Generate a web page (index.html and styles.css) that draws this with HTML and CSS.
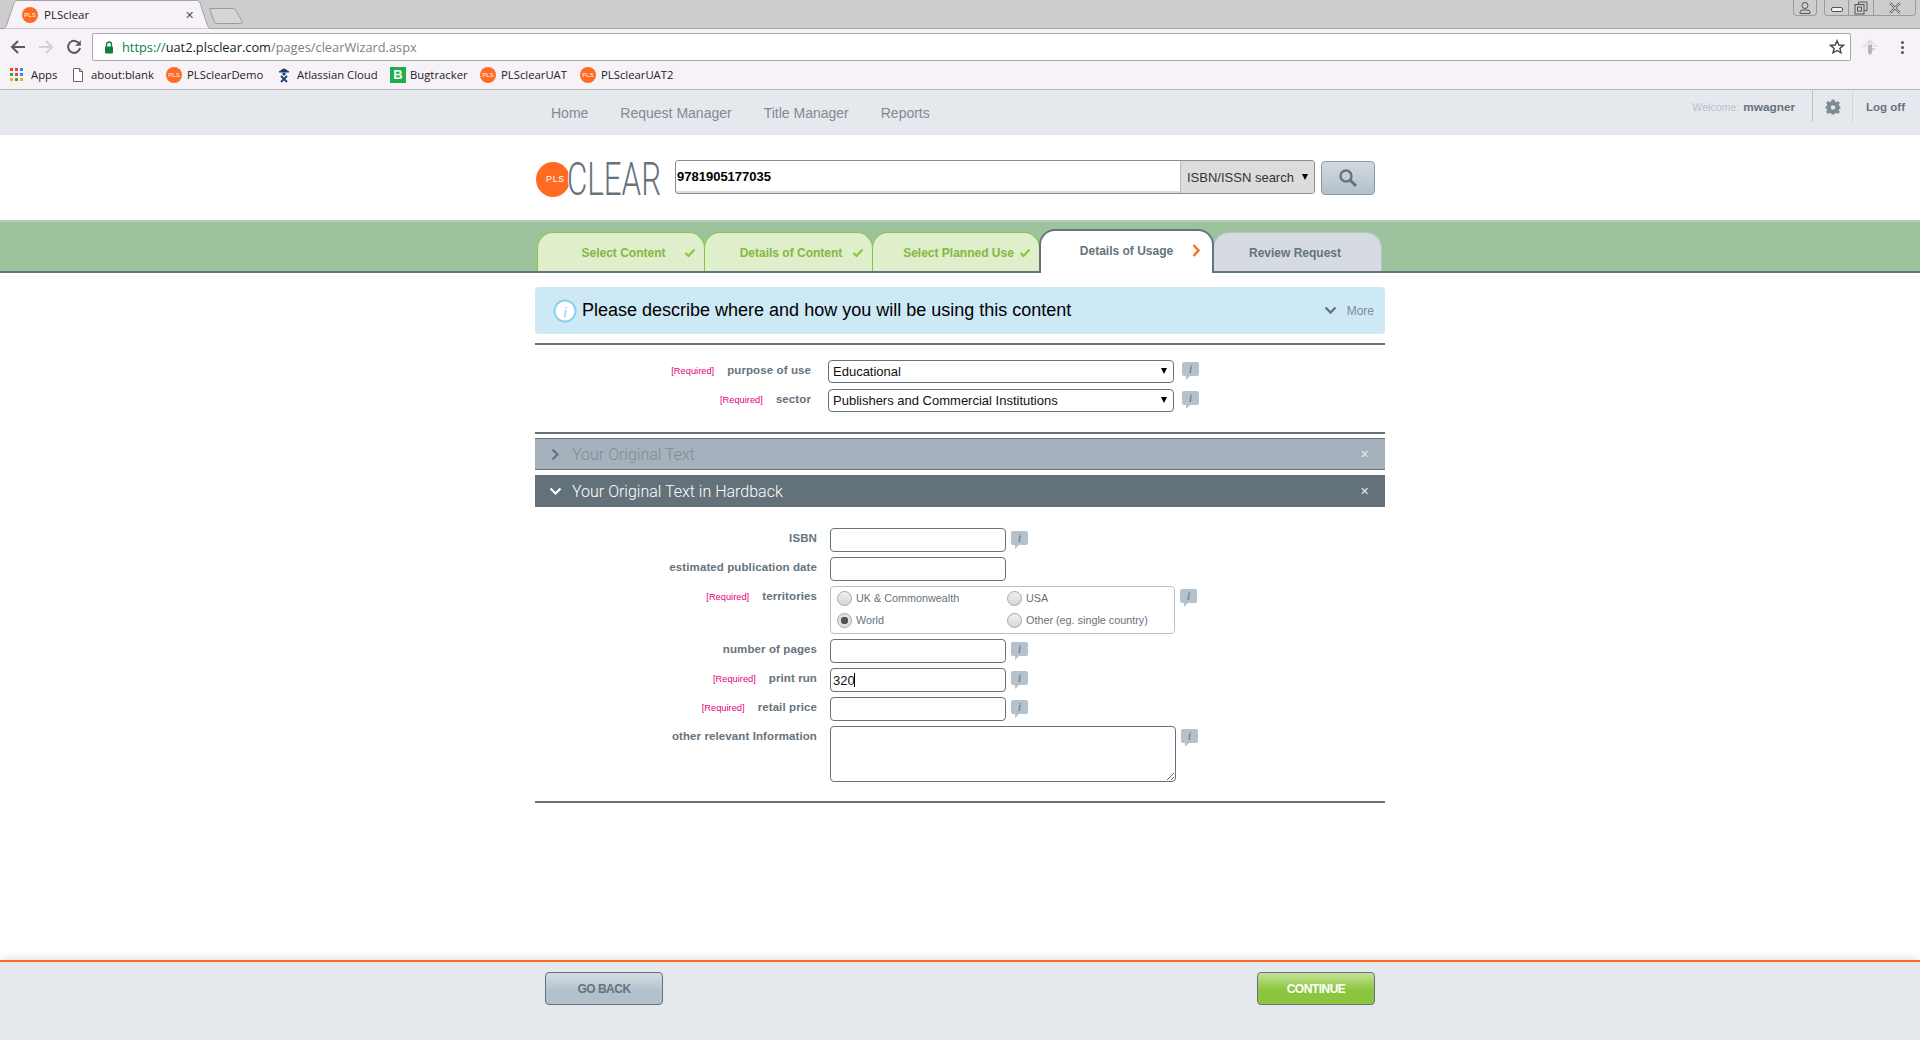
FILE: index.html
```html
<!DOCTYPE html>
<html>
<head>
    <title>PLSclear</title>
    <link rel="stylesheet" href="styles.css">
</head>
<body>
<div class="browser">
    <div class="tabstrip">
        <div class="browser-tab">
            <svg class="tab-shape" width="214" height="29" viewBox="0 0 214 29"><path d="M0 29 C5 29 6 27 7 24 L14 3 C15 1 16 .5 18 .5 L196 .5 C198 .5 199 1 200 3 L207 24 C208 27 209 29 214 29 Z" fill="#f6f2f7" stroke="#a3a3a3"/></svg>
            <span class="favicon">PLS</span>
            <span class="tab-title">PLSclear</span>
            <span class="tab-close">✕</span>
        </div>
        <svg class="new-tab" width="36" height="18" viewBox="0 0 36 18"><path d="M1.5 1.5 L25 1.5 Q27 1.5 28 3.5 L34 14 Q35 16.5 32 16.5 L9 16.5 Q7 16.5 6.5 15 Z" fill="#d6d6d6" stroke="#9c9c9c"/></svg>
        <div class="window-controls">
            <div class="win-btn win-profile">
                <svg width="14" height="12" viewBox="0 0 14 12"><circle cx="7" cy="3.5" r="3" fill="none" stroke="#555"/><path d="M2 11.5 V10 Q2 8 5 8 H9 Q12 8 12 10 V11.5 Z" fill="none" stroke="#555"/></svg>
            </div>
            <div class="win-group">
                <div class="win-btn"><svg width="14" height="12" viewBox="0 0 14 12"><rect x="1.5" y="5.5" width="11" height="4" rx="1.5" fill="#f4f4f4" stroke="#555"/></svg></div>
                <div class="win-btn"><svg width="14" height="14" viewBox="0 0 14 14"><path d="M4.5 3.5 V1 H13 V9.5 H10.5" fill="none" stroke="#555"/><rect x="1" y="3.5" width="9" height="9.5" fill="none" stroke="#555"/><rect x="3.5" y="6" width="4" height="4" fill="none" stroke="#555"/></svg></div>
                <div class="win-btn win-close"><svg width="14" height="12" viewBox="0 0 14 12"><path d="M2 1 L12 11 M12 1 L2 11" stroke="#666" stroke-width="2.4"/><path d="M2 1 L12 11 M12 1 L2 11" stroke="#eee" stroke-width=".8"/></svg></div>
            </div>
        </div>
    </div>
    <div class="toolbar">
        <svg class="tool-icon" width="16" height="16" viewBox="0 0 16 16"><path d="M15 8 H2.5 M8 2 L2 8 L8 14" fill="none" stroke="#5a5a5a" stroke-width="2"/></svg>
        <svg class="tool-icon" width="16" height="16" viewBox="0 0 16 16"><path d="M1 8 H13.5 M8 2 L14 8 L8 14" fill="none" stroke="#d4d0d5" stroke-width="2"/></svg>
        <svg class="tool-icon" width="16" height="16" viewBox="0 0 16 16"><path d="M13.4 5 A6 6 0 1 0 14 9" fill="none" stroke="#5a5a5a" stroke-width="2"/><path d="M14.8 1.2 V6.8 H9.2 Z" fill="#5a5a5a"/></svg>
        <div class="omnibox">
            <svg class="lock" width="10" height="13" viewBox="0 0 10 13"><path d="M2.5 6 V3.5 A2.5 2.5 0 0 1 7.5 3.5 V6" fill="none" stroke="#0b8043" stroke-width="1.4"/><rect x="1" y="5.5" width="8" height="7" rx="1" fill="#0b8043"/></svg>
            <span class="url"><span class="url-scheme">https://</span><span class="url-host">uat2.plsclear.com</span>/pages/clearWizard.aspx</span>
            <svg class="star" width="16" height="16" viewBox="0 0 16 16"><path d="M8 1.8 L9.8 6 L14.4 6.4 L10.9 9.4 L12 13.9 L8 11.5 L4 13.9 L5.1 9.4 L1.6 6.4 L6.2 6 Z" fill="none" stroke="#444" stroke-width="1.4"/></svg>
        </div>
        <svg class="ext-icon" width="18" height="18" viewBox="0 0 18 18"><path d="M9 1 L13.5 5.5 H4.5 Z" fill="#dcdcdc"/><path d="M0 9 L4.5 5.5 L7 9 Z M18 9 L13.5 5.5 L11 9 Z" fill="#e4e4e4"/><path d="M7 6.5 H11 V15 L9 17 L7 15 Z" fill="#b5b5b5"/><path d="M11 10 H15 L12 13 H11 Z" fill="#d0d0d0"/></svg>
        <div class="menu-dots"><i></i><i></i><i></i></div>
    </div>
    <div class="bookmarks">
        <span class="bookmark bm-apps">
            <span class="apps-grid"><i class="r"></i><i class="r"></i><i class="b"></i><i class="g"></i><i class="r"></i><i class="b"></i><i class="y"></i><i class="g"></i><i class="y"></i></span>Apps
        </span>
        <span class="bookmark bm-blank">
            <svg width="10" height="14" viewBox="0 0 10 14"><path d="M.5 .5 H6.5 L9.5 3.5 V13.5 H.5 Z M6.5 .5 V3.5 H9.5" fill="#fff" stroke="#666"/></svg>about:blank
        </span>
        <span class="bookmark bm-demo"><span class="favicon">PLS</span>PLSclearDemo</span>
        <span class="bookmark bm-atl">
            <svg width="12" height="16" viewBox="0 0 12 16"><path d="M2 4 Q6 -1 10 4 Z" fill="#1d3f72"/><rect x="1" y="4" width="10" height="1.5" fill="#1d3f72"/><circle cx="6" cy="7" r="1.6" fill="#1d3f72"/><path d="M3 9 L9 15 M9 9 L3 15" stroke="#1d3f72" stroke-width="1.8"/></svg>Atlassian Cloud
        </span>
        <span class="bookmark bm-bug"><span class="bug-icon">B</span>Bugtracker</span>
        <span class="bookmark bm-uat"><span class="favicon">PLS</span>PLSclearUAT</span>
        <span class="bookmark"><span class="favicon">PLS</span>PLSclearUAT2</span>
    </div>
</div>

<div class="topnav">
    <div class="topnav-links">
        <a>Home</a>
        <a>Request Manager</a>
        <a>Title Manager</a>
        <a>Reports</a>
    </div>
    <div class="user-box">
        <span class="welcome">Welcome:</span>
        <span class="username">mwagner</span>
        <span class="gear-cell">
            <svg width="16" height="16" viewBox="0 0 16 16"><path d="M6.6 .6 H9.4 L9.8 2.6 L11.2 3.2 L12.9 2 L14.9 4 L13.7 5.7 L14.3 7.1 L15.4 7.4 V9.6 L14.3 9.9 L13.7 11.3 L14.9 13 L12.9 15 L11.2 13.8 L9.8 14.4 L9.4 15.6 H6.6 L6.2 14.4 L4.8 13.8 L3.1 15 L1.1 13 L2.3 11.3 L1.7 9.9 L.6 9.6 V7.4 L1.7 7.1 L2.3 5.7 L1.1 4 L3.1 2 L4.8 3.2 L6.2 2.6 Z" fill="#7f8b94"/><circle cx="8" cy="8.4" r="2.2" fill="#e5e8ed"/></svg>
        </span>
        <span class="logoff">Log off</span>
    </div>
</div>

<div class="search-row">
    <div class="logo">
        <span class="logo-circle">PLS</span>
        <span class="logo-word">CLEAR</span>
    </div>
    <div class="search-box">
        <input class="search-input" type="text" value="9781905177035">
        <div class="search-type-wrap"><select class="search-type"><option>ISBN/ISSN search</option></select></div>
    </div>
    <button class="search-btn">
        <svg width="20" height="20" viewBox="0 0 20 20"><circle cx="8" cy="8" r="5.5" fill="none" stroke="#66737c" stroke-width="2.4"/><path d="M12 12 L18 18" stroke="#66737c" stroke-width="3"/></svg>
    </button>
</div>

<div class="steps">
    <div class="steps-inner">
        <div class="step done step-1">Select Content<svg class="tick" width="12" height="10" viewBox="0 0 12 10"><path d="M1.5 5 L4.5 8 L10.5 1.5" fill="none" stroke="#8cc63f" stroke-width="2.2"/></svg></div>
        <div class="step done step-2">Details of Content<svg class="tick" width="12" height="10" viewBox="0 0 12 10"><path d="M1.5 5 L4.5 8 L10.5 1.5" fill="none" stroke="#8cc63f" stroke-width="2.2"/></svg></div>
        <div class="step done step-3">Select Planned Use<svg class="tick" width="12" height="10" viewBox="0 0 12 10"><path d="M1.5 5 L4.5 8 L10.5 1.5" fill="none" stroke="#8cc63f" stroke-width="2.2"/></svg></div>
        <div class="step active">Details of Usage<svg class="arrow" width="9" height="13" viewBox="0 0 9 13"><path d="M1.5 1 L6.5 6.5 L1.5 12" fill="none" stroke="#ff6b22" stroke-width="2.4"/></svg></div>
        <div class="step todo">Review Request</div>
    </div>
</div>

<div class="content">
    <div class="intro">
        <svg class="intro-icon" width="24" height="24" viewBox="0 0 24 24"><circle cx="12" cy="12" r="10.5" fill="#fff" stroke="#8fd0f0" stroke-width="2"/><text x="12" y="17.5" class="intro-i">i</text></svg>
        <span class="intro-text">Please describe where and how you will be using this content</span>
        <svg class="more-chevron" width="13" height="9" viewBox="0 0 13 9"><path d="M1.5 1.5 L6.5 6.5 L11.5 1.5" fill="none" stroke="#66737c" stroke-width="2.4"/></svg>
        <span class="more">More</span>
    </div>

    <div class="top-form">
        <div class="top-row">
            <label class="top-label"><span class="req">[Required]</span>purpose of use</label>
            <div class="select-wrap"><select><option>Educational</option></select></div>
            <span class="info"><svg width="17" height="18" viewBox="0 0 17 18"><path d="M2 0 H15 Q17 0 17 2 V12 Q17 14 15 14 H8 L4 18 L4 14 H2 Q0 14 0 12 V2 Q0 0 2 0 Z" fill="#b4c2ce"/><text x="8.5" y="11">i</text></svg></span>
        </div>
        <div class="top-row">
            <label class="top-label"><span class="req">[Required]</span>sector</label>
            <div class="select-wrap"><select><option>Publishers and Commercial Institutions</option></select></div>
            <span class="info"><svg width="17" height="18" viewBox="0 0 17 18"><path d="M2 0 H15 Q17 0 17 2 V12 Q17 14 15 14 H8 L4 18 L4 14 H2 Q0 14 0 12 V2 Q0 0 2 0 Z" fill="#b4c2ce"/><text x="8.5" y="11">i</text></svg></span>
        </div>
    </div>

    <div class="bar bar-closed">
        <svg class="bar-chevron" width="9" height="13" viewBox="0 0 9 13"><path d="M1.5 1.5 L6.5 6.5 L1.5 11.5" fill="none" stroke="#66737c" stroke-width="2.2"/></svg>
        <span class="bar-title">Your Original Text</span>
        <span class="bar-close">✕</span>
    </div>
    <div class="bar bar-open">
        <svg class="bar-chevron-down" width="13" height="9" viewBox="0 0 13 9"><path d="M1.5 1.5 L6.5 6.5 L11.5 1.5" fill="none" stroke="#fff" stroke-width="2.2"/></svg>
        <span class="bar-title">Your Original Text in Hardback</span>
        <span class="bar-close">✕</span>
    </div>

    <div class="detail-form">
        <div class="row">
            <label class="row-label">ISBN</label>
            <input class="field" type="text">
            <span class="info"><svg width="17" height="18" viewBox="0 0 17 18"><path d="M2 0 H15 Q17 0 17 2 V12 Q17 14 15 14 H8 L4 18 L4 14 H2 Q0 14 0 12 V2 Q0 0 2 0 Z" fill="#b4c2ce"/><text x="8.5" y="11">i</text></svg></span>
        </div>
        <div class="row">
            <label class="row-label">estimated publication date</label>
            <input class="field" type="text">
        </div>
        <div class="row">
            <label class="row-label"><span class="req">[Required]</span>territories</label>
            <div class="radio-box">
                <label class="radio"><input type="radio" name="territory">UK &amp; Commonwealth</label>
                <label class="radio"><input type="radio" name="territory">USA</label>
                <label class="radio"><input type="radio" name="territory" checked>World</label>
                <label class="radio"><input type="radio" name="territory">Other (eg. single country)</label>
            </div>
            <span class="info"><svg width="17" height="18" viewBox="0 0 17 18"><path d="M2 0 H15 Q17 0 17 2 V12 Q17 14 15 14 H8 L4 18 L4 14 H2 Q0 14 0 12 V2 Q0 0 2 0 Z" fill="#b4c2ce"/><text x="8.5" y="11">i</text></svg></span>
        </div>
        <div class="row">
            <label class="row-label">number of pages</label>
            <input class="field" type="text">
            <span class="info"><svg width="17" height="18" viewBox="0 0 17 18"><path d="M2 0 H15 Q17 0 17 2 V12 Q17 14 15 14 H8 L4 18 L4 14 H2 Q0 14 0 12 V2 Q0 0 2 0 Z" fill="#b4c2ce"/><text x="8.5" y="11">i</text></svg></span>
        </div>
        <div class="row">
            <label class="row-label"><span class="req">[Required]</span>print run</label>
            <div class="field-wrap">
                <input class="field" type="text" value="320">
                <span class="caret"></span>
            </div>
            <span class="info"><svg width="17" height="18" viewBox="0 0 17 18"><path d="M2 0 H15 Q17 0 17 2 V12 Q17 14 15 14 H8 L4 18 L4 14 H2 Q0 14 0 12 V2 Q0 0 2 0 Z" fill="#b4c2ce"/><text x="8.5" y="11">i</text></svg></span>
        </div>
        <div class="row">
            <label class="row-label"><span class="req">[Required]</span>retail price</label>
            <input class="field" type="text">
            <span class="info"><svg width="17" height="18" viewBox="0 0 17 18"><path d="M2 0 H15 Q17 0 17 2 V12 Q17 14 15 14 H8 L4 18 L4 14 H2 Q0 14 0 12 V2 Q0 0 2 0 Z" fill="#b4c2ce"/><text x="8.5" y="11">i</text></svg></span>
        </div>
        <div class="row">
            <label class="row-label">other relevant Information</label>
            <textarea class="notes"></textarea>
            <span class="info"><svg width="17" height="18" viewBox="0 0 17 18"><path d="M2 0 H15 Q17 0 17 2 V12 Q17 14 15 14 H8 L4 18 L4 14 H2 Q0 14 0 12 V2 Q0 0 2 0 Z" fill="#b4c2ce"/><text x="8.5" y="11">i</text></svg></span>
        </div>
    </div>
</div>

<div class="footer">
    <div class="footer-inner">
        <button class="btn btn-back">GO BACK</button>
        <button class="btn btn-continue">CONTINUE</button>
    </div>
</div>
</body>
</html>
```

FILE: styles.css
```css
* {
    box-sizing: border-box;
}

html, body {
    height: 100%;
}

body {
    margin: 0;
    height: 1040px;
    display: flex;
    flex-direction: column;
    overflow: hidden;
    background: #fff;
    font-family: "Liberation Sans", Arial, sans-serif;
    color: #66737c;
}

/* browser chrome */
.browser {
    flex: none;
    font-family: "Open Sans", "Liberation Sans", sans-serif;
    color: #333;
}

.tabstrip {
    height: 29px;
    display: flex;
    align-items: flex-start;
    position: relative;
    background: #cdcdcd;
    border-bottom: 1px solid #a3a3a3;
}

.browser-tab {
    position: relative;
    width: 214px;
    height: 29px;
    display: flex;
    align-items: center;
    padding: 0 0 0 22px;
    font-size: 11.5px;
    margin-bottom: -1px;
}

.tab-shape {
    position: absolute;
    left: 0;
    top: 0;
}

.browser-tab .favicon,
.tab-title,
.tab-close {
    position: relative;
}

.tab-title {
    margin-left: 6px;
    flex: 1;
    color: #222;
}

.tab-close {
    margin-right: 20px;
    font-size: 11px;
    color: #555;
}

.new-tab {
    margin: 7px 0 0 -6px;
}

.window-controls {
    margin-left: auto;
    margin-right: 4px;
    display: flex;
    gap: 7px;
}

.win-group {
    display: flex;
}

.win-btn {
    width: 25px;
    height: 16px;
    display: flex;
    align-items: center;
    justify-content: center;
    border: 1px solid #9a9a9a;
    border-top: none;
    border-left-width: 0;
}

.win-group .win-btn:first-child {
    border-left-width: 1px;
    border-bottom-left-radius: 4px;
}

.win-close {
    width: 42px;
    border-bottom-right-radius: 4px;
}

.win-profile {
    width: 24px;
    border-left-width: 1px;
    border-radius: 0 0 4px 4px;
}

.toolbar {
    height: 32px;
    display: flex;
    align-items: center;
    background: #f6f2f7;
    padding: 4px 0 0 10px;
}

.tool-icon {
    margin-right: 12px;
}

.tool-icon:nth-child(3) {
    margin-right: 10px;
}

.omnibox {
    width: 1759px;
    height: 28px;
    display: flex;
    align-items: center;
    padding: 0 5px 0 11px;
    background: #fff;
    border: 1px solid #a9a9a9;
    border-radius: 2px;
}

.lock {
    margin-right: 8px;
}

.url {
    font-size: 12.8px;
    flex: 1;
    color: #808080;
}

.url-scheme {
    color: #0b8043;
}

.url-host {
    color: #222;
}

.ext-icon {
    margin-left: 10px;
}

.menu-dots {
    margin-left: 22px;
    display: flex;
    flex-direction: column;
    gap: 2px;
}

.menu-dots i {
    width: 3px;
    height: 3px;
    background: #555;
    border-radius: 50%;
}

.bookmarks {
    height: 29px;
    display: flex;
    align-items: center;
    padding: 0 0 1px 10px;
    background: #f6f2f7;
    border-bottom: 1px solid #b5b5b5;
    font-size: 11.3px;
    color: #222;
}

.bookmark {
    display: flex;
    align-items: center;
    gap: 5px;
    white-space: nowrap;
}

.bm-apps { width: 63px; gap: 8px; }
.bm-blank { width: 93px; gap: 8px; }
.bm-demo { width: 110px; }
.bm-atl { width: 114px; gap: 7px; padding-left: 2px; }
.bm-bug { width: 90px; gap: 4px; }
.bm-uat { width: 100px; }

.apps-grid {
    width: 13px;
    height: 13px;
    display: grid;
    grid-template-columns: repeat(3, 3px);
    grid-auto-rows: 3px;
    gap: 2px;
}

.apps-grid .r { background: #e8453c; }
.apps-grid .b { background: #3f7fe8; }
.apps-grid .g { background: #2da94f; }
.apps-grid .y { background: #f5b400; }

.bug-icon {
    width: 16px;
    height: 16px;
    background: #1fae4b;
    color: #fff;
    font: bold 13px/16px "Liberation Sans", sans-serif;
    text-align: center;
}

.favicon {
    width: 16px;
    height: 16px;
    flex: none;
    border-radius: 50%;
    background: #ff6b22;
    color: #fff;
    font: 6px/16px "Liberation Sans", sans-serif;
    text-align: center;
}

/* site nav */
.topnav {
    flex: none;
    height: 45px;
    position: relative;
    background: #e5e8ed;
}

.topnav-links {
    width: 850px;
    margin: 0 auto;
    padding: 15px 0 0 16px;
    display: flex;
    gap: 32px;
    font-size: 14px;
    color: #7f8b94;
}

.user-box {
    position: absolute;
    right: 15px;
    top: 1px;
    height: 31px;
    display: flex;
    align-items: center;
    font-size: 11px;
}

.welcome {
    color: #b4c2ce;
    margin-right: 4px;
    font-size: 10.6px;
}

.username {
    font-weight: bold;
    font-size: 11.8px;
    margin-right: 17px;
}

.gear-cell {
    width: 41px;
    height: 31px;
    display: flex;
    align-items: center;
    justify-content: center;
    border-left: 1px solid #b4c2ce;
    border-right: 1px solid #cfd5db;
}

.logoff {
    margin-left: 13px;
    font-weight: bold;
    font-size: 11.5px;
}

/* logo and search */
.search-row {
    flex: none;
    width: 850px;
    height: 85px;
    margin: 0 auto;
    padding-top: 25px;
    display: flex;
    align-items: flex-start;
}

.logo {
    width: 140px;
    height: 40px;
    margin-top: 2px;
    position: relative;
    flex: none;
}

.logo-circle {
    position: absolute;
    left: 1px;
    top: 0;
    width: 34px;
    height: 35px;
    border-radius: 50%;
    background: #ff6b22;
    color: #fff;
    font-size: 9px;
    letter-spacing: .6px;
    line-height: 35px;
    text-align: center;
    padding-left: 5px;
}

.logo-word {
    position: absolute;
    left: 32px;
    top: -5px;
    font-family: Roboto, "Liberation Sans", sans-serif;
    font-weight: 300;
    font-size: 46px;
    line-height: 44px;
    white-space: nowrap;
    color: #66737c;
    text-shadow: -1px 0 0 #fff;
    transform: scaleX(.68);
    transform-origin: left top;
}

.search-box {
    width: 640px;
    height: 34px;
    display: flex;
    border: 1px solid #8b8b8b;
    border-radius: 3px;
    overflow: hidden;
    box-shadow: inset 0 -2px 0 #ddd;
}

.search-input {
    flex: 1;
    min-width: 0;
    border: none;
    outline: none;
    background: transparent;
    padding: 0 2px 2px 1px;
    font: bold 13px "Liberation Sans", sans-serif;
    color: #000;
}

.search-type-wrap {
    width: 134px;
    position: relative;
    flex: none;
}

.search-type-wrap::after {
    content: "";
    position: absolute;
    right: 6px;
    top: 13px;
    border: 3.5px solid transparent;
    border-top: 6px solid #000;
    border-bottom: none;
}

.search-type {
    width: 100%;
    height: 100%;
    appearance: none;
    border: none;
    border-left: 1px solid #bbb;
    border-radius: 0;
    padding: 0 16px 0 6px;
    font: 13px "Liberation Sans", sans-serif;
    color: #333;
    background: #dcdcdc;
}

.search-btn {
    width: 54px;
    height: 34px;
    margin: 1px 0 0 6px;
    padding: 0;
    display: flex;
    align-items: center;
    justify-content: center;
    border: 1px solid #8d9aa5;
    border-radius: 4px;
    background: linear-gradient(#d2dae1, #b2c0cb);
}

/* wizard steps */
.steps {
    flex: none;
    height: 53px;
    background: #9dc39d;
    border-top: 2px solid #b4c8c0;
    border-bottom: 2px solid #66737c;
}

.steps-inner {
    width: 850px;
    height: 51px;
    margin: 0 auto;
    padding: 10px 0 0 2px;
    display: flex;
    align-items: flex-start;
}

.step {
    height: 39px;
    display: flex;
    align-items: center;
    justify-content: center;
    position: relative;
    flex: none;
    border-radius: 16px 16px 0 0;
    font-size: 12px;
    font-weight: bold;
}

.done {
    background: #dfeecb;
    color: #84b83e;
    border: 1px solid #8cc63f;
    border-bottom: none;
    padding: 2px 0 0 5px;
    margin-right: -1px;
}

.step-1 { width: 168px; }
.step-2 { width: 169px; }
.step-3 { width: 168px; }

.tick {
    position: absolute;
    right: 8px;
    top: 15px;
}

.active {
    width: 175px;
    height: 44px;
    margin-top: -3px;
    background: #fff;
    border: 2px solid #66737c;
    border-bottom: none;
    padding-bottom: 3px;
    z-index: 1;
    margin-bottom: -2px;
}

.arrow {
    position: absolute;
    right: 11px;
    top: 13px;
}

.todo {
    width: 169px;
    background: #d5dbe0;
    border: 1px solid #b4c2ce;
    border-bottom: none;
    margin-left: -1px;
    padding: 2px 5px 0 0;
}

/* page body */
.content {
    flex: 1;
    width: 850px;
    margin: 0 auto;
    padding-top: 14px;
}

.intro {
    height: 47px;
    display: flex;
    align-items: center;
    padding: 0 11px 0 18px;
    background: #cee9f6;
    border-radius: 4px;
}

.intro-i {
    font: italic 15px "Liberation Serif", serif;
    fill: #8fd0f0;
    text-anchor: middle;
}

.intro-text {
    flex: 1;
    margin-left: 5px;
    font-size: 18px;
    color: #000;
}

.more-chevron {
    margin-right: 10px;
}

.more {
    font-size: 12px;
    color: #7f8b94;
}

.top-form {
    margin-top: 9px;
    height: 91px;
    padding-top: 15px;
    border-top: 2px solid #66737c;
    border-bottom: 2px solid #66737c;
}

.top-row {
    height: 23px;
    margin-bottom: 6px;
    display: flex;
}

.top-label {
    width: 276px;
    padding-top: 4px;
    text-align: right;
    font-size: 11.5px;
    letter-spacing: .1px;
    font-weight: bold;
}

.req {
    margin-right: 13px;
    font-size: 9.3px;
    letter-spacing: 0;
    font-weight: normal;
    color: #e6007e;
}

.select-wrap {
    width: 346px;
    height: 23px;
    margin-left: 17px;
    position: relative;
}

.select-wrap select {
    width: 100%;
    height: 100%;
    appearance: none;
    padding: 0 20px 0 4px;
    border: 1px solid #66737c;
    border-radius: 4px;
    background: #fff;
    font: 13px "Liberation Sans", sans-serif;
    color: #111;
}

.select-wrap::after {
    content: "";
    position: absolute;
    right: 7px;
    top: 8px;
    border: 3.5px solid transparent;
    border-top: 6px solid #000;
    border-bottom: none;
}

.info {
    flex: none;
    margin-left: 8px;
    height: 18px;
    line-height: 0;
}

.info text {
    font: italic 13px "Liberation Serif", serif;
    fill: #66737c;
    text-anchor: middle;
}

.top-row .info {
    margin-top: 2px;
}

.bar {
    height: 32px;
    margin-top: 5px;
    display: flex;
    align-items: center;
    padding: 0 16px 0 16px;
}

.bar-closed {
    margin-top: 4px;
    background: #a5b1bc;
    border-top: 1px solid #66737c;
    border-bottom: 1px solid #66737c;
    color: #7f8b94;
}

.bar-open {
    padding-left: 14px;
    background: #63717a;
    color: #fff;
}

.bar-title {
    flex: 1;
    font-family: Roboto, "Liberation Sans", sans-serif;
    font-size: 16px;
    font-weight: 300;
    margin-left: 12px;
}

.bar-open .bar-title {
    margin-left: 10px;
}

.bar-close {
    font-size: 11px;
    color: #e5e8ed;
}

.detail-form {
    margin-top: 21px;
    padding-bottom: 19px;
    border-bottom: 2px solid #66737c;
}

.row {
    display: flex;
    align-items: flex-start;
    margin-bottom: 5px;
}

.row:last-child {
    margin-bottom: 0;
}

.row-label {
    width: 282px;
    padding-top: 4px;
    text-align: right;
    font-size: 11.5px;
    letter-spacing: .1px;
    font-weight: bold;
    flex: none;
}

.field {
    width: 176px;
    height: 24px;
    margin-left: 13px;
    padding: 0 2px;
    border: 1px solid #66737c;
    border-radius: 4px;
    outline: none;
    font: 13px "Liberation Sans", sans-serif;
    color: #111;
}

.field-wrap {
    position: relative;
    display: flex;
}

.caret {
    position: absolute;
    left: 37px;
    top: 5px;
    width: 1px;
    height: 14px;
    background: #000;
}

.row .info {
    margin-top: 3px;
    margin-left: 5px;
}

.radio-box {
    width: 345px;
    height: 48px;
    margin-left: 13px;
    padding: 0 0 2px 6px;
    display: grid;
    grid-template-columns: 170px 1fr;
    grid-auto-rows: 22px;
    align-content: center;
    border: 1px solid #b4c2ce;
    border-radius: 4px;
}

.radio {
    display: flex;
    align-items: center;
    gap: 4px;
    font-size: 10.8px;
    letter-spacing: 0;
    font-weight: normal;
    color: #66737c;
}

.radio input {
    width: 15px;
    height: 15px;
    margin: 0;
    appearance: none;
    border: 1px solid #a6a6a6;
    border-radius: 50%;
    background: linear-gradient(#f0f0f0, #d6d6d6);
}

.radio input:checked {
    background: radial-gradient(circle, #555 0 3.5px, #e2e2e2 4px);
}

.notes {
    width: 346px;
    height: 56px;
    margin-left: 13px;
    border: 1px solid #66737c;
    border-radius: 4px;
    outline: none;
}

/* footer buttons */
.footer {
    flex: none;
    height: 80px;
    background: #e5e8ed;
    border-top: 2px solid #ff6b22;
    box-shadow: 0 -7px 7px -3px rgba(0, 0, 0, 0.08);
}

.footer-inner {
    width: 850px;
    margin: 0 auto;
    padding: 10px 10px 0 10px;
    display: flex;
    justify-content: space-between;
}

.btn {
    width: 118px;
    height: 33px;
    border: 1px solid #66737c;
    border-radius: 4px;
    font: bold 12px "Liberation Sans", sans-serif;
    letter-spacing: -0.5px;
}

.btn-back {
    background: linear-gradient(#d5dde3, #b2c0cb 60%);
    color: #66737c;
}

.btn-continue {
    background: linear-gradient(#c4e297, #8cc63f 55%);
    color: #fff;
}
```
